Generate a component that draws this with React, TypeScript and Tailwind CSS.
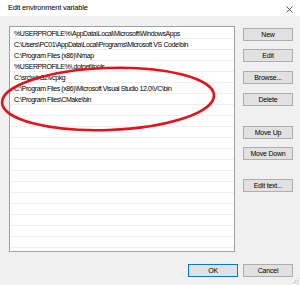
import React from "react"

const paths = [
  "%USERPROFILE%\\AppData\\Local\\Microsoft\\WindowsApps",
  "C:\\Users\\PC01\\AppData\\Local\\Programs\\Microsoft VS Code\\bin",
  "C:\\Program Files (x86)\\Nmap",
  "%USERPROFILE%\\.dotnet\\tools",
  "C:\\src\\win32\\vcpkg",
  "C:\\Program Files (x86)\\Microsoft Visual Studio 12.0\\VC\\bin",
  "C:\\Program Files\\CMake\\bin",
]

function Btn({ label, className = "" }: { label: string; className?: string }) {
  return (
    <div
      className={`flex h-[13px] w-[50px] items-center justify-center border border-[#adadad] bg-[#e1e1e1] text-[7px] leading-none tracking-[-0.2px] text-black ${className}`}
    >
      {label}
    </div>
  )
}

export default function App() {
  const rows = Array.from({ length: 20 }, (_, i) => paths[i] ?? "")

  return (
    <div
      className="relative flex h-[285px] w-[300px] flex-col overflow-hidden bg-[#f0f0f0] text-black"
      style={{ fontFamily: '"Liberation Sans", Arial, sans-serif' }}
    >
      {/* title bar */}
      <div className="flex h-[16px] shrink-0 items-center justify-between bg-white pl-[8px] pr-[7px]">
        <span className="text-[7.5px] leading-none tracking-[-0.2px]">Edit environment variable</span>
        <svg width="7" height="7" viewBox="0 0 7 7" className="mt-[2px]">
          <path d="M0.5 0.5 L6.5 6.5 M6.5 0.5 L0.5 6.5" stroke="#333" strokeWidth="0.8" />
        </svg>
      </div>

      {/* body */}
      <div className="flex flex-1 flex-col pl-[9px] pr-[7px] pt-[10px]">
        <div className="flex gap-[8px]">
          <div className="h-[226px] w-[226px] overflow-hidden border border-[#a0a0a0] bg-white pt-[1px]">
            {rows.map((p, i) => (
              <div
                key={i}
                className="flex h-[11px] items-center border-b border-[#f0f0f0] pl-[4px] text-[7px] leading-none tracking-[-0.42px] whitespace-nowrap"
              >
                {p}
              </div>
            ))}
          </div>

          <div className="flex flex-col pt-[2px]">
            <Btn label="New" />
            <Btn label="Edit" className="mt-[8px]" />
            <Btn label="Browse..." className="mt-[9px]" />
            <Btn label="Delete" className="mt-[9px]" />
            <Btn label="Move Up" className="mt-[20px]" />
            <Btn label="Move Down" className="mt-[8px]" />
            <Btn label="Edit text..." className="mt-[19px]" />
          </div>
        </div>

        <div className="mt-[12px] flex justify-end gap-[5px]">
          <Btn label="OK" className="!border-[#0078d7] w-[49px]" />
          <Btn label="Cancel" />
        </div>
      </div>

      {/* resize grip */}
      <svg width="6" height="6" viewBox="0 0 6 6" className="absolute bottom-[1px] right-[1px]">
        <rect x="4" y="0" width="1" height="1" fill="#b8b8b8" />
        <rect x="2" y="2" width="1" height="1" fill="#b8b8b8" />
        <rect x="4" y="2" width="1" height="1" fill="#b8b8b8" />
        <rect x="0" y="4" width="1" height="1" fill="#b8b8b8" />
        <rect x="2" y="4" width="1" height="1" fill="#b8b8b8" />
        <rect x="4" y="4" width="1" height="1" fill="#b8b8b8" />
      </svg>

      {/* red annotation ellipse */}
      <svg width="300" height="285" className="pointer-events-none absolute left-0 top-0">
        <ellipse
          cx="108"
          cy="99"
          rx="106"
          ry="31"
          transform="rotate(-2 108 99)"
          fill="none"
          stroke="#e3121c"
          strokeWidth="2.6"
        />
      </svg>
    </div>
  )
}
